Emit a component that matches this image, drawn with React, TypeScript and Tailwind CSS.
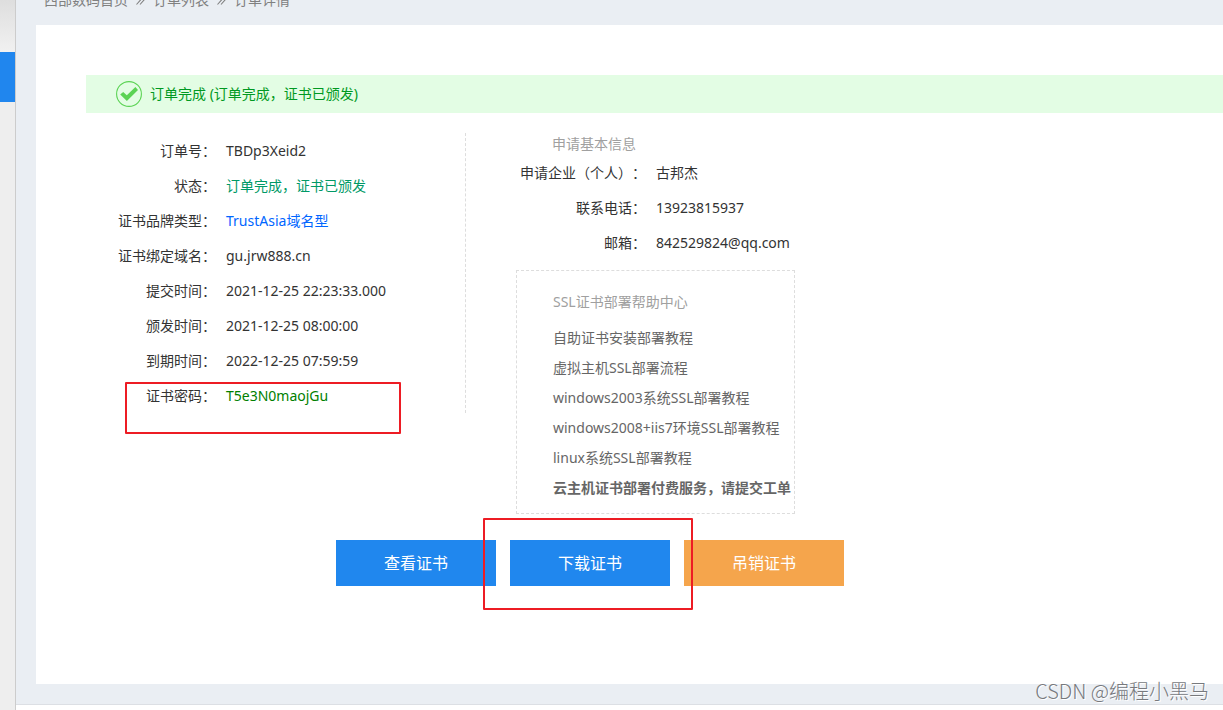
import { Fragment, type ReactNode } from "react";

type Field = { label: string; value: ReactNode; tone?: string; marked?: boolean };

const orderFields: Field[] = [
  { label: "订单号", value: "TBDp3Xeid2" },
  { label: "状态", value: "订单完成\uFF0C证书已颁发", tone: "text-[#009966]" },
  {
    label: "证书品牌类型",
    value: <a href="#brand" className="text-[#0066ff]">TrustAsia域名型</a>,
  },
  { label: "证书绑定域名", value: "gu.jrw888.cn" },
  { label: "提交时间", value: "2021-12-25 22:23:33.000" },
  { label: "颁发时间", value: "2021-12-25 08:00:00" },
  { label: "到期时间", value: "2022-12-25 07:59:59" },
  { label: "证书密码", value: "T5e3N0maojGu", tone: "text-[#008000]", marked: true },
];

const applicantFields: Field[] = [
  { label: "申请企业\uFF08个人\uFF09", value: "古邦杰" },
  { label: "联系电话", value: "13923815937" },
  { label: "邮箱", value: "842529824@qq.com" },
];

const guides = [
  "自助证书安装部署教程",
  "虚拟主机SSL部署流程",
  "windows2003系统SSL部署教程",
  "windows2008+iis7环境SSL部署教程",
  "linux系统SSL部署教程",
];

const crumbs = ["西部数码首页", "订单列表", "订单详情"];

function FieldRow({ label, value, tone = "text-[#333333]", marked }: Field) {
  return (
    <div className="relative flex gap-2.5 leading-[35px]">
      <dt className="w-[130px] shrink-0 whitespace-nowrap text-right">{label + "\uFF1A"}</dt>
      <dd className={`whitespace-nowrap ${tone}`}>{value}</dd>
      {marked && (
        <span className="pointer-events-none absolute left-[39px] top-1 h-[52px] w-[276px] rounded-[1px] border-2 border-[#ed1c24]" />
      )}
    </div>
  );
}

function DoubleChevron() {
  return (
    <svg viewBox="0 0 9 10" className="mx-2 h-2.5 w-[9px]" fill="none" stroke="#808080" strokeWidth="1.1">
      <path d="M0.5 0.5 4.5 5 0.5 9.5M4 0.5 8 5 4 9.5" />
    </svg>
  );
}

export default function App() {
  return (
    <div
      lang="zh-CN"
      className="relative flex min-h-screen overflow-hidden bg-[#eaeef3] font-['Noto_Sans','Noto_Sans_CJK_SC',sans-serif] text-sm text-[#333333] [text-spacing-trim:space-all]"
    >
      <aside className="w-4 shrink-0 border-r border-[#cccccc] bg-[#eeeeee]">
        <div className="h-[52px] bg-linear-to-b from-[#dedede] to-[#f1f1f1]" />
        <div className="h-[50px] bg-[#2086ee]" />
      </aside>

      <div className="flex min-w-0 grow flex-col">
        <nav className="h-[25px] overflow-hidden pl-7">
          <div className="-mt-2.5 flex items-center leading-5 text-[#808080]">
            {crumbs.map((crumb, i) => (
              <Fragment key={crumb}>
                {i > 0 && <DoubleChevron />}
                <a href="#crumb">{crumb}</a>
              </Fragment>
            ))}
          </div>
        </nav>

        <main className="ml-5 grow bg-white pl-[50px] pt-[50px]">
          <div className="flex h-[38px] items-center gap-2 bg-[#e3fde4] pl-[30px] text-[#009922]">
            <svg viewBox="0 0 26 26" className="size-[26px]" fill="none">
              <circle cx="13" cy="13" r="12.4" stroke="#5bd354" strokeWidth="1.1" />
              <path d="M4.2 13.6 7.2 10.9 10.8 14.2 19.4 6 22 9 10.9 20Z" fill="#5bd354" />
            </svg>
            <p>{"订单完成 (订单完成\uFF0C证书已颁发)"}</p>
          </div>

          <div className="flex items-start gap-[50px] pt-5">
            <dl className="w-[380px] border-r border-dashed border-[#dddddd]">
              {orderFields.map((field) => (
                <FieldRow key={field.label} {...field} />
              ))}
            </dl>

            <div className="w-[279px]">
              <h2 className="pl-9 leading-[22px] text-[#a0a0a0]">申请基本信息</h2>
              <dl>
                {applicantFields.map((field) => (
                  <FieldRow key={field.label} {...field} />
                ))}
              </dl>
              <section className="mt-[10px] border border-dashed border-[#dddddd] pb-2.5 pl-9 pt-3">
                <h2 className="mb-0.5 leading-[38px] text-[#a0a0a0]">SSL证书部署帮助中心</h2>
                <ul className="whitespace-nowrap leading-[30px] text-[#666666]">
                  {guides.map((guide) => (
                    <li key={guide}>
                      <a href="#guide">{guide}</a>
                    </li>
                  ))}
                  <li className="font-bold">
                    <a href="#ticket">{"云主机证书部署付费服务\uFF0C请提交工单"}</a>
                  </li>
                </ul>
              </section>
            </div>
          </div>

          <div className="flex gap-3.5 pl-[250px] pt-[26px] text-base text-white">
            <button type="button" className="h-[46px] w-40 bg-[#2087ee]">查看证书</button>
            <div className="relative">
              <button type="button" className="h-[46px] w-40 bg-[#2087ee]">下载证书</button>
              <span className="pointer-events-none absolute -left-[27px] -top-[22px] z-10 h-[92px] w-[210px] rounded-[1px] border-2 border-[#ed1c24]" />
            </div>
            <button type="button" className="h-[46px] w-40 bg-[#f5a54c]">吊销证书</button>
          </div>
        </main>

        <footer className="mt-5 h-1.5 border-t border-[#dcdfe4] bg-white" />
      </div>

      <p className="absolute bottom-1 right-3.5 font-['Noto_Sans_CJK_SC',sans-serif] text-xl font-light leading-[30px] text-[#77797d] [text-shadow:1px_1px_0_#ffffff]">
        CSDN @编程小黑马
      </p>
    </div>
  );
}
